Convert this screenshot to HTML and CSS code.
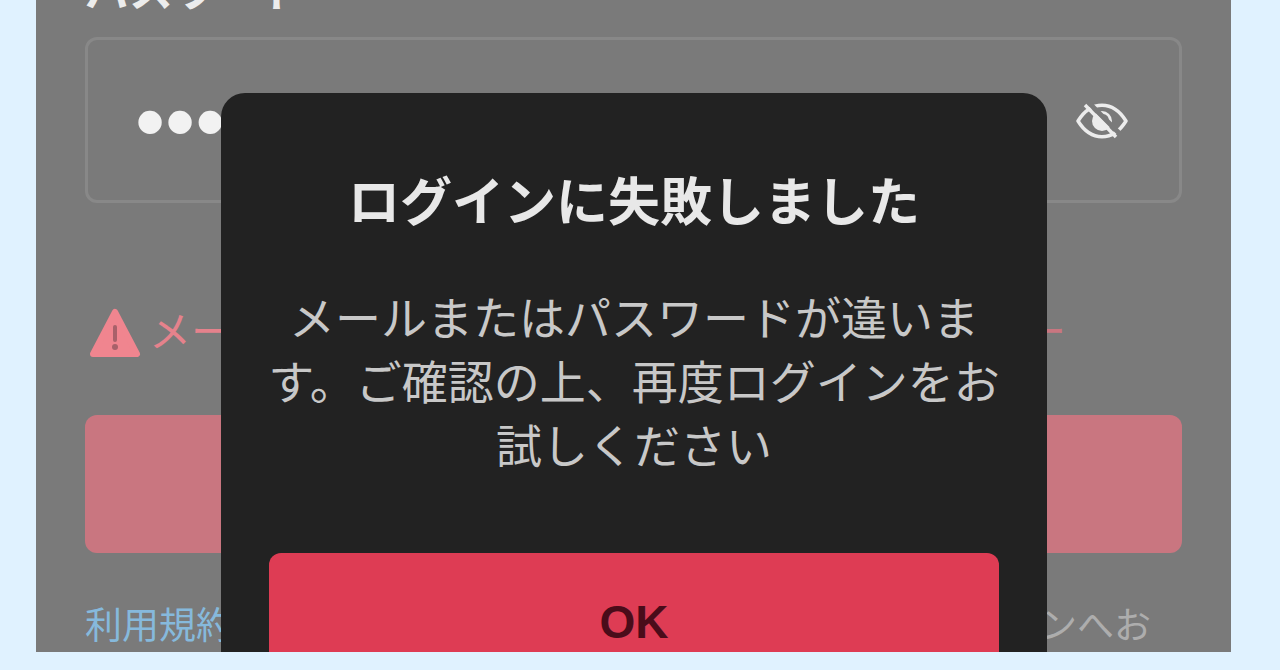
FILE: index.html
```html
<!DOCTYPE html>
<html lang="ja">
<head>
    <meta charset="UTF-8">
    <meta name="viewport" content="width=device-width, initial-scale=1.0">
    <title>ログイン</title>
    <link rel="stylesheet" href="styles.css">
</head>
<body>
    <div class="screen">
        <form class="login-form">
            <label class="field-label" for="password">パスワード</label>
            <div class="field">
                <input type="password" id="password" name="password" value="password">
                <button type="button" class="toggle" aria-label="パスワードを表示">
                    <svg viewBox="0 0 52 38" width="52" height="38" fill="none">
                        <path d="M2 19C15 -2 37 -2 50 19C37 40 15 40 2 19Z" stroke="#ececec" stroke-width="3.5" stroke-linejoin="round"/>
                        <circle cx="26" cy="19" r="10" fill="#ececec"/>
                        <path d="M27 13q5 1 5 6" stroke="#7a7a7a" stroke-width="2"/>
                        <path d="M12 0L44 32" stroke="#7a7a7a" stroke-width="5"/>
                        <path d="M9 3L40 35" stroke="#ececec" stroke-width="3.5"/>
                    </svg>
                </button>
            </div>
            <div class="error">
                <svg viewBox="0 0 52 50" width="52" height="50">
                    <path d="M26 4L48 46H4Z" fill="#f0858f" stroke="#f0858f" stroke-width="6" stroke-linejoin="round"/>
                    <path d="M26 19V32" stroke="#a8616a" stroke-width="4" stroke-linecap="round"/>
                    <circle cx="26" cy="39" r="3" fill="#a8616a"/>
                </svg>
                <span>メー</span>
                <span class="error-end">ー</span>
            </div>
            <button type="submit" class="btn login-btn" aria-label="ログイン"></button>
            <p class="terms"><a href="#">利用規約</a><span>ンへお</span></p>
        </form>

        <div class="overlay">
            <div class="dialog" role="alertdialog" aria-labelledby="dialogTitle" aria-describedby="dialogText">
                <h1 id="dialogTitle">ログインに失敗しました</h1>
                <p id="dialogText">メールまたはパスワードが違います。ご確認の上、再度ログインをお試しください</p>
                <button type="button" class="btn ok-btn">OK</button>
            </div>
        </div>
    </div>
</body>
</html>
```
FILE: styles.css
```css
* {
    box-sizing: border-box;
}
body {
    margin: 0;
    height: 100vh;
    padding: 0 49px 18px 36px;
    background-color: #e0f2ff;
    font-family: "Liberation Sans", "Noto Sans CJK JP", sans-serif;
}
.screen {
    position: relative;
    height: 100%;
    overflow: hidden;
    background-color: #7a7a7a;
}
.login-form {
    display: flex;
    flex-direction: column;
    padding: 0 49px;
}
.field-label {
    margin: -30px 0 23px;
    font-size: 44px;
    line-height: 44px;
    font-weight: bold;
    color: #ececec;
}
.field {
    display: flex;
    align-items: center;
    height: 166px;
    padding: 2px 51px 0 47px;
    border: 3px solid #888;
    border-radius: 12px;
}
.field input {
    flex: 1;
    min-width: 0;
    padding: 0;
    border: none;
    outline: none;
    background: none;
    color: #f2f2f2;
    font-family: "Liberation Sans", sans-serif;
    font-size: 86px;
}
.toggle {
    display: flex;
    padding: 0;
    border: none;
    background: none;
    cursor: pointer;
}
.error {
    display: flex;
    align-items: center;
    gap: 8px;
    margin: 98px 0 50px;
    padding: 0 116px 0 4px;
    font-size: 42px;
    line-height: 64px;
    color: #e5828c;
}
.error-end {
    margin-left: auto;
    color: #c97680;
}
.btn {
    width: 100%;
    height: 138px;
    border: none;
    border-radius: 12px;
    cursor: pointer;
}
.login-btn {
    background-color: #c97680;
}
.terms {
    display: flex;
    justify-content: space-between;
    margin: 50px 0 0;
    padding-right: 31px;
    font-size: 37px;
    line-height: 48px;
    color: #adadad;
}
.terms a {
    color: #86b9dc;
    text-decoration: none;
}
.overlay {
    position: absolute;
    inset: 0;
    padding: 93px 184px 0 185px;
}
.dialog {
    padding: 78px 40px 48px;
    border-radius: 24px;
    background-color: #222;
    text-align: center;
}
.dialog h1 {
    margin: 0 0 52px;
    font-size: 52px;
    line-height: 64px;
    color: #e8e8e8;
}
.dialog p {
    margin: 0 0 74px;
    font-size: 46px;
    line-height: 64px;
    color: #c8c8c8;
}
.ok-btn {
    width: calc(100% - 16px);
    background-color: #de3c54;
    color: #4a0c1a;
    font-family: "Liberation Sans", sans-serif;
    font-size: 46px;
    font-weight: bold;
}
```
